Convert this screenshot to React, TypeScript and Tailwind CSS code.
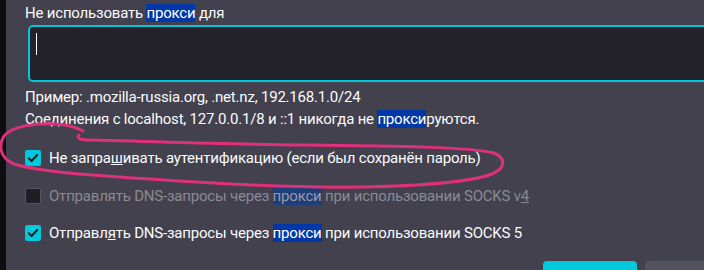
import React from 'react';

const font = { fontFamily: 'Roboto, "Noto Sans", sans-serif' };

const Hl = ({ children, dim }: { children: React.ReactNode; dim?: boolean }) => (
  <span className={dim ? 'bg-[#1f3f7a] text-[#9a9aa8]' : 'bg-[#0038a8] text-white'}>{children}</span>
);

const Check = ({ checked, disabled }: { checked?: boolean; disabled?: boolean }) =>
  checked ? (
    <span className="flex h-[16px] w-[16px] shrink-0 items-center justify-center rounded-[2px] bg-[#00c9db]">
      <svg viewBox="0 0 16 16" className="h-[14px] w-[14px]">
        <path d="M3.2 8.3 6.4 11.4 12.8 4.6" fill="none" stroke="#1c1b22" strokeWidth="2.2" strokeLinecap="round" strokeLinejoin="round" />
      </svg>
    </span>
  ) : (
    <span
      className={
        'h-[16px] w-[16px] shrink-0 rounded-[2px] border bg-[#1f1e25] ' +
        (disabled ? 'border-[#55545f]' : 'border-[#8f8f9d]')
      }
    />
  );

const Row = ({
  checked,
  disabled,
  children,
  className,
}: {
  checked?: boolean;
  disabled?: boolean;
  children: React.ReactNode;
  className?: string;
}) => (
  <div className={'flex items-center gap-[8px] ' + (className ?? '')}>
    <Check checked={checked} disabled={disabled} />
    <span className={disabled ? 'text-[#8b8a96]' : 'text-[#fbfbfe]'}>{children}</span>
  </div>
);

export default function App() {
  return (
    <div className="flex h-[270px] w-[704px] overflow-hidden text-[15px] leading-[20px] tracking-[-0.2px]" style={font}>
      <div className="w-[6px] shrink-0 bg-[#0e0e10]" />
      <div className="relative flex-1 bg-[#42414d] pl-[19px] text-[#fbfbfe]">
        <div className="mt-[3px]">
          Не использовать <Hl>прокси</Hl> для
        </div>
        <div className="ml-[3px] mt-[2px] h-[57px] w-[700px] rounded-[5px] border-2 border-[#00c9db] bg-[#23222b] pl-[6px] pt-[6px]">
          <div className="h-[22px] w-px bg-[#fbfbfe]" />
        </div>
        <div className="mt-[5px]">Пример: .mozilla-russia.org, .net.nz, 192.168.1.0/24</div>
        <div className="mt-[2px]">
          Соединения с localhost, 127.0.0.1/8 и ::1 никогда не <Hl>прокси</Hl>руются.
        </div>
        <Row checked className="mt-[19px]">
          Не запра<span className="underline">ш</span>ивать аутентификацию (если был сохранён пароль)
        </Row>
        <Row disabled className="mt-[18px]">
          Отправлять DNS-запросы через <Hl dim>прокси</Hl> при использовании SOCKS v<span className="underline">4</span>
        </Row>
        <Row checked className="mt-[17px]">
          Отправл<span className="underline">я</span>ть DNS-запросы через <Hl>прокси</Hl> при использовании SOCKS 5
        </Row>
        <div className="mt-[18px] flex gap-[8px] pl-[518px]">
          <div className="h-[12px] w-[94px] rounded-t-[4px] bg-[#00c9db]" />
          <div className="h-[12px] w-[80px] rounded-t-[4px] bg-[#52515e]" />
        </div>
        <svg className="pointer-events-none absolute left-[-6px] top-0" width="704" height="270" viewBox="0 0 704 270">
          <path
            d="M83 131 C 78 128, 70 125, 55 124 C 35 123, 12 126, 4 136 C -2 146, 0 158, 14 164 C 40 172, 90 175, 150 179 C 220 184, 290 188, 360 187 C 420 186, 470 182, 492 174 C 506 168, 506 158, 494 153 C 470 147, 400 146, 300 145 C 220 144, 140 141, 90 140 C 80 140, 76 138, 79 135"
            fill="none"
            stroke="#e0307c"
            strokeWidth="3"
            strokeLinecap="round"
          />
        </svg>
      </div>
    </div>
  );
}
